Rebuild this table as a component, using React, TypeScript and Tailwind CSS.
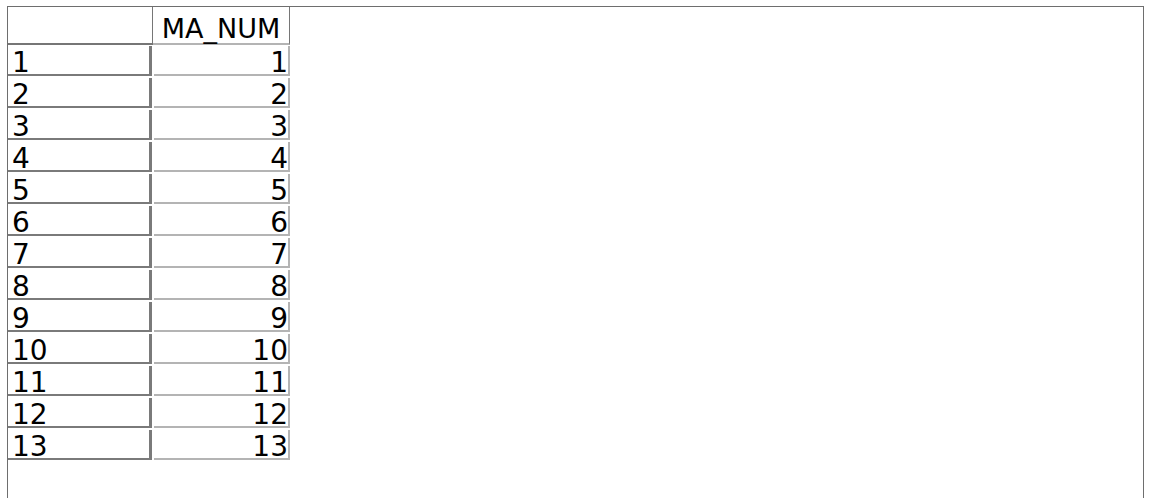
const rows = Array.from({ length: 13 }, (_, i) => i + 1);

const App = () => {
  return (
    <div className="h-[498px] overflow-hidden bg-white pt-[6px] pl-[7px] pr-[6px]">
      <div
        className="h-[520px] border border-[#6e6e6e] text-black"
        style={{ fontFamily: '"DejaVu Sans", sans-serif' }}
      >
        {/* Header */}
        <div className="flex">
          <div className="h-[38px] w-[145px] border-r border-b-2 border-[#767676]" />
          <div className="flex h-[38px] w-[137px] items-end justify-center border-r border-r-[#767676] border-b-2 border-b-[#b4b4b4] pb-[4px] text-[27px] leading-[20px]">
            MA_NUM
          </div>
        </div>

        {/* Rows */}
        <div className="mt-[1px] flex flex-col gap-[2px] text-[28px]">
          {rows.map((n) => (
            <div key={n} className="flex gap-[2px]">
              <div className="flex h-[30px] w-[144px] items-end border-r-[3px] border-b-2 border-[#7a7a7a] pl-[4px] leading-[22px]">
                {n}
              </div>
              <div className="flex h-[30px] w-[136px] items-end justify-end border-r-2 border-b-2 border-[#b4b4b4] leading-[22px]">
                {n}
              </div>
            </div>
          ))}
        </div>
      </div>
    </div>
  );
};

export default App;
